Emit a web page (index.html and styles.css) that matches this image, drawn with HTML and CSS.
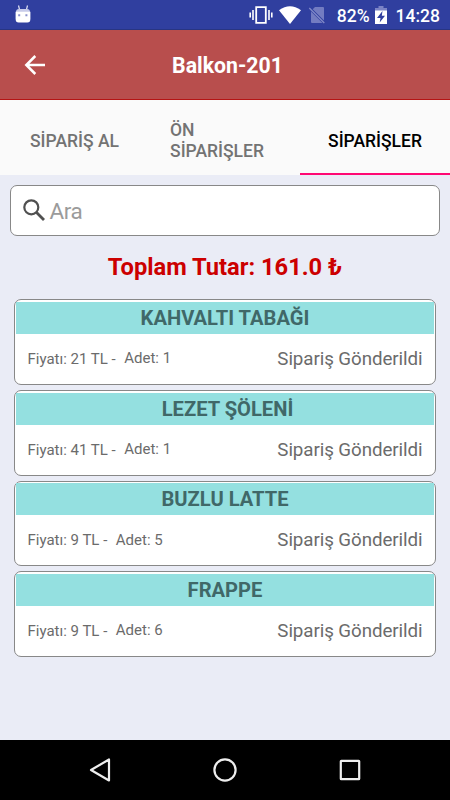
FILE: index.html
```html
<!DOCTYPE html>
<html lang="tr">
<head>
<meta charset="utf-8">
<title>Balkon-201</title>
<link rel="stylesheet" href="styles.css">
</head>
<body>
<div class="status">
  <svg class="debug" viewBox="0 0 16 18" width="16" height="18"><path d="M3.500 .500l1 4M12.500 .500l-1 4" stroke="#dfe1f3" stroke-width="1.200"/><path d="M1 7Q1 4 4 4h8q3 0 3 3z" fill="#c7cbe9"/><path d="M.6 6.800h14.800V14q0 3.500-3 3.500H3.600q-3 0-3-3.500z" fill="#fff"/><path d="M3.200 9.300h2v2h-2zM10.400 9.300h2v2h-2z" fill="#8990cb"/></svg>
  <svg class="vibrate" viewBox="0 0 24 18" width="24" height="18"><path d="M7.200 1.200h9.600v15.600H7.200z" fill="none" stroke="#fff" stroke-width="1.800"/><path d="M4 4v10M20 4v10M1.200 6.500v5M22.800 6.500v5" stroke="#fff" stroke-width="1.600"/></svg>
  <svg class="wifi" viewBox="0 0 22 18" width="22" height="18"><path d="M0 4.200Q11-3.800 22 4.200L11 18z" fill="#fff"/></svg>
  <svg class="sim" viewBox="0 0 18 18" width="18" height="18"><path d="M7 1h8q1 0 1 1v12.500L4.700 3.300zM3 5.500v10.500q0 1 1 1h10.500z" fill="#737cc1"/><path d="M1.300 2l15 15" stroke="#8189c8" stroke-width="1.300"/></svg>
  <span class="percent">82%</span>
  <svg class="battery" viewBox="0 0 12 18" width="12" height="18"><path d="M3.500 0h5v2H12v5H0V2h3.500z" fill="#7b83c5"/><path d="M0 4.500h12V18H0z" fill="#fff"/><path d="M7.500 5L2 12h3.500L4.700 16.500 10 9.800H6.800z" fill="#303f9f"/></svg>
  <span class="clock">14:28</span>
</div>
<header class="appbar">
  <svg class="back" viewBox="0 0 22 22" width="22" height="22"><path d="M21 11H2.500M11.300 2L2.300 11l9 9" fill="none" stroke="#fff" stroke-width="2.500"/></svg>
  <h1>Balkon-201</h1>
</header>
<nav class="tabs">
  <div class="tab"><span>SİPARİŞ AL</span></div>
  <div class="tab"><span>ÖN<br>SİPARİŞLER</span></div>
  <div class="tab active"><span>SİPARİŞLER</span></div>
</nav>
<main>
  <div class="search">
    <svg viewBox="0 0 22 22" width="22" height="22"><circle cx="8.300" cy="8.300" r="7" fill="none" stroke="#505050" stroke-width="2.200"/><path d="M13.300 13.300l7.700 7.700" stroke="#505050" stroke-width="2.800"/></svg>
    <span>Ara</span>
  </div>
  <div class="total">Toplam Tutar: 161.0 ₺</div>
  <div class="orders">
    <article class="card"><h2>KAHVALTI TABAĞI</h2><div class="row"><span class="price">Fiyatı: 21 TL -</span><span class="qty">Adet: 1</span><span class="state">Sipariş Gönderildi</span></div></article>
    <article class="card"><h2 class="shifted">LEZET ŞÖLENİ</h2><div class="row"><span class="price">Fiyatı: 41 TL -</span><span class="qty">Adet: 1</span><span class="state">Sipariş Gönderildi</span></div></article>
    <article class="card"><h2>BUZLU LATTE</h2><div class="row"><span class="price">Fiyatı: 9 TL -</span><span class="qty">Adet: 5</span><span class="state">Sipariş Gönderildi</span></div></article>
    <article class="card"><h2>FRAPPE</h2><div class="row"><span class="price">Fiyatı: 9 TL -</span><span class="qty">Adet: 6</span><span class="state">Sipariş Gönderildi</span></div></article>
  </div>
</main>
<footer class="navbar">
  <svg viewBox="0 0 24 26" width="24" height="26"><path d="M21 2.500v21L3 13z" fill="none" stroke="#eee" stroke-width="2.200" stroke-linejoin="round"/></svg>
  <svg viewBox="0 0 24 26" width="24" height="26"><circle cx="12" cy="13" r="10.600" fill="none" stroke="#eee" stroke-width="2.200"/></svg>
  <svg viewBox="0 0 24 26" width="24" height="26"><rect x="2.800" y="3.800" width="18.400" height="18.400" rx=".5" fill="none" stroke="#eee" stroke-width="2.200"/></svg>
</footer>
</body>
</html>
```
FILE: styles.css
```css
* { box-sizing: border-box; }
body {
  margin: 0;
  width: 450px;
  height: 800px;
  overflow: hidden;
  display: flex;
  flex-direction: column;
  background: #eaecf6;
  font-family: Roboto, sans-serif;
}
svg { display: block; flex: none; }
h1, h2 { margin: 0; }
.status {
  height: 30px;
  flex: none;
  display: flex;
  align-items: center;
  padding: 0 10px 0 15px;
  background: #303f9f;
  border-bottom: 1px solid #283583;
  color: #fff;
  font-size: 17.5px;
  font-weight: 500;
}
.debug { margin-right: auto; margin-top: -2px; }
.vibrate { margin-right: 6px; }
.wifi { margin-right: 7px; }
.sim { margin-right: 11px; }
.percent { margin-right: 5px; position: relative; top: 1px; }
.battery { margin-right: 9px; margin-top: 1px; }
.clock { position: relative; top: 1px; }
.appbar {
  height: 70px;
  flex: none;
  display: grid;
  grid-template-columns: 72px 1fr 67px;
  align-items: center;
  background: #b84e4d;
  border-bottom: 1px solid #b51414;
  color: #fff;
}
.back { margin-left: 24px; }
.appbar h1 {
  font-size: 21.25px;
  font-weight: 700;
  text-align: center;
  line-height: 30px;
  margin-top: 2px;
}
.tabs {
  height: 75px;
  flex: none;
  display: grid;
  grid-template-columns: repeat(3, 1fr);
  background: #fafafa;
}
.tab {
  display: flex;
  align-items: center;
  justify-content: center;
  padding-top: 6px;
  font-size: 17.5px;
  line-height: 21px;
  font-weight: 500;
  color: #737373;
}
.tab:first-child { padding-top: 8px; padding-right: 1px; }
.tab:nth-child(2) { padding-right: 16px; }
.tab.active {
  color: #000;
  padding-top: 9px;
  border-bottom: 2px solid #ff0873;
}
main { flex: 1; padding: 10px 10px 0; }
.search {
  height: 51px;
  display: flex;
  align-items: center;
  padding-left: 12px;
  border: 1px solid #888;
  border-radius: 7px;
  background: #fff;
  color: #9b9b9b;
  font-size: 22.5px;
  letter-spacing: -0.4px;
}
.search svg { margin-top: -1px; }
.search span { margin: 1px 0 0 4.5px; }
.total {
  margin-top: 15px;
  height: 32px;
  line-height: 32px;
  text-align: center;
  color: #c00;
  font-size: 23.7px;
  font-weight: 700;
}
.orders {
  margin-top: 16.4px;
  padding: 0 4px;
  display: grid;
  gap: 5px;
}
.card {
  height: 85.67px;
  padding: 1.5px 1px 0;
  border: 1px solid #888;
  border-radius: 7px;
  background: #fff;
}
.card h2 {
  height: 32px;
  line-height: 33px;
  background: #94e0e0;
  color: #406868;
  font-size: 20.15px;
  text-align: center;
}
.card h2.shifted { padding-left: 5px; }
.row {
  height: 50px;
  display: flex;
  align-items: center;
  padding: 0 11.5px;
  color: #6b6b6b;
  font-size: 15px;
}
.qty { margin: -1px 0 0 8.5px; }
.state { margin-left: auto; font-size: 18.75px; letter-spacing: -0.08px; }
.navbar {
  height: 60px;
  flex: none;
  display: flex;
  justify-content: space-between;
  align-items: center;
  padding: 0 88px;
  background: #000;
}
```
